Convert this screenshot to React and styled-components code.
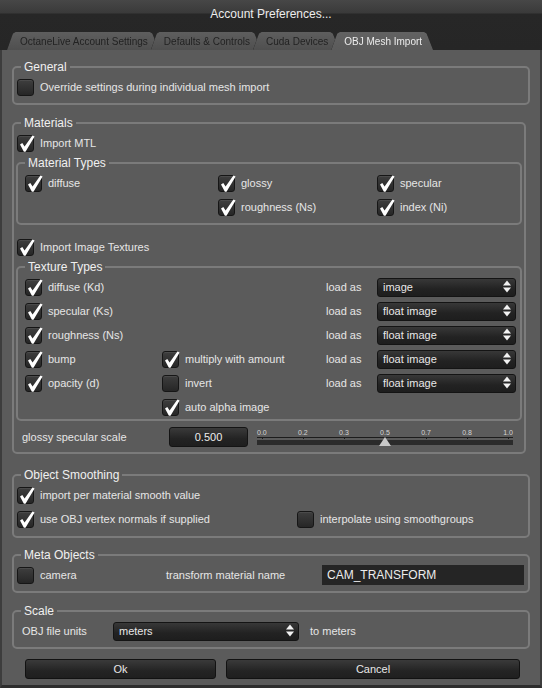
import React from "react";
import styled, { createGlobalStyle } from "styled-components";

const GlobalStyle = createGlobalStyle`
  html, body {
    margin: 0;
    padding: 0;
    background: #5b5b5b;
  }
  body {
    font-family: "Liberation Sans", Arial, sans-serif;
    font-size: 11px;
    color: #e6e6e6;
  }
  * {
    box-sizing: border-box;
  }
`;

const Window = styled.div`
  width: 542px;
  height: 688px;
  display: flex;
  flex-direction: column;
  background: #5b5b5b;
  overflow: hidden;
`;

const Header = styled.div`
  height: 50px;
  display: flex;
  flex-direction: column;
  background: linear-gradient(#474747 0, #3a3a3a 13px, #272727 14px, #262626 100%);
`;

const Title = styled.div`
  height: 32px;
  padding-top: 7px;
  text-align: center;
  font-size: 12px;
  line-height: 14px;
  color: #ececec;
`;

const TabBar = styled.div`
  display: flex;
  align-items: flex-end;
  height: 18px;
  padding-left: 7px;
`;

const Tab = styled.div`
  position: relative;
  margin-left: -8px;
  z-index: ${(p) => (p.$active ? 2 : 1)};
  filter: drop-shadow(0 0 0.7px #101010);

  &:first-child {
    margin-left: 0;
  }
`;

const TabFace = styled.div`
  height: 18px;
  padding: 0 11px 0 13px;
  line-height: 19px;
  font-size: 10px;
  white-space: nowrap;
  color: ${(p) => (p.$active ? "#ececec" : "#222")};
  background: ${(p) =>
    p.$active
      ? "linear-gradient(#626262, #5b5b5b)"
      : "linear-gradient(#5e5e5e, #4f4f4f)"};
  clip-path: polygon(
    0 100%,
    5px 4px,
    6px 1.5px,
    8.5px 0,
    calc(100% - 9px) 0,
    calc(100% - 6.5px) 1.5px,
    calc(100% - 5.5px) 4px,
    100% 100%
  );
`;

const Body = styled.div`
  flex: 1;
  padding: 0 10px;
  border-left: 2px solid #3d3d3d;
  border-right: 2px solid #3d3d3d;
  border-bottom: 3px solid #2e2e2e;
`;

const Group = styled.fieldset`
  margin: ${(p) => p.$mt || 0}px ${(p) => p.$mr || 0}px 0 ${(p) => p.$ml || 0}px;
  padding: 0 ${(p) => p.$pr ?? 3}px ${(p) => p.$pb || 0}px ${(p) => p.$pl ?? 3}px;
  border: 2px solid #7b7b7b;
  border-radius: 5px;
  min-width: 0;
`;

const Legend = styled.legend`
  margin-left: ${(p) => p.$ml ?? 4}px;
  padding: 0 3px;
  font-size: 12px;
  line-height: 16px;
  color: #f0f0f0;
`;

const Row = styled.div`
  display: flex;
  align-items: center;
  height: 24px;
  margin-top: ${(p) => p.$mt || 0}px;
  padding-left: ${(p) => p.$pl || 0}px;
`;

const Grid = styled.div`
  display: grid;
  grid-template-columns: ${(p) => p.$cols};
  grid-auto-rows: 24px;
  align-items: center;
`;

const Label = styled.label`
  display: flex;
  align-items: center;
  gap: 6px;
  white-space: nowrap;
`;

const Box = styled.span`
  position: relative;
  flex-shrink: 0;
  width: 17px;
  height: 17px;
  border: 1px solid #161616;
  border-radius: 3px;
  background: linear-gradient(#3e3e3e, #262626);
  box-shadow: inset 0 1px 0 rgba(255, 255, 255, 0.07);
`;

const Tick = styled.svg`
  position: absolute;
  left: -1px;
  top: -1px;
  overflow: visible;
`;

const Text = styled.span`
  white-space: nowrap;
  width: ${(p) => (p.$w ? `${p.$w}px` : "auto")};
  margin-left: ${(p) => p.$ml || 0}px;
  flex-shrink: 0;
`;

const SelectBox = styled.div`
  display: flex;
  align-items: center;
  justify-content: space-between;
  width: ${(p) => (p.$w ? `${p.$w}px` : "100%")};
  height: 19px;
  padding: 0 4px 1px 5px;
  border: 1px solid #141414;
  border-radius: 3px;
  background: linear-gradient(#383838, #222 60%, #1e1e1e);
  color: #e8e8e8;
`;

const NumberField = styled.div`
  width: 79px;
  height: 20px;
  line-height: 19px;
  text-align: center;
  border: 1px solid #141414;
  border-radius: 3px;
  background: linear-gradient(#3a3a3a, #232323 60%, #1f1f1f);
  color: #ececec;
`;

const TextField = styled.div`
  width: 202px;
  height: 20px;
  line-height: 20px;
  padding-left: 5px;
  background: #252525;
  color: #ececec;
  font-size: 12px;
`;

const Slider = styled.div`
  position: relative;
  width: 256px;
  height: 24px;
  margin-left: 9px;
  display: flex;
  flex-direction: column;
  padding-top: 4px;
`;

const SliderScale = styled.div`
  display: flex;
  justify-content: space-between;
  height: 8px;
  font-size: 7px;
  line-height: 8px;
  color: #d4d4d4;
`;

const ScaleMark = styled.span`
  position: relative;

  &::after {
    content: "";
    position: absolute;
    left: 50%;
    bottom: -2px;
    width: 1px;
    height: 2px;
    background: #1c1c1c;
  }
`;

const Rule = styled.div`
  height: 1px;
  background: #1c1c1c;
`;

const Track = styled.div`
  margin-top: 2px;
  height: 5px;
  background: #2b2b2b;
`;

const Thumb = styled.div`
  position: absolute;
  left: calc(50% - 6.5px);
  top: 12px;
  width: 0;
  height: 0;
  border-left: 6.5px solid transparent;
  border-right: 6.5px solid transparent;
  border-bottom: 9px solid #c8c8c8;
`;

const Buttons = styled.div`
  display: flex;
  gap: 10px;
  margin-top: 10px;
  padding-left: 13px;
`;

const Button = styled.button`
  width: ${(p) => p.$w}px;
  height: 20px;
  padding: 0;
  border: 1px solid #121212;
  border-radius: 3px;
  background: linear-gradient(#3a3a3a, #242424 60%, #1f1f1f);
  color: #e8e8e8;
  font-family: inherit;
  font-size: 11px;
`;

function CheckBox({ on, children }) {
  return (
    <Label>
      <Box>
        {on && (
          <Tick width="17" height="17" viewBox="0 0 17 17">
            <path
              d="M3 9.6 L5.3 7.9 L7.6 11.6 L15.4 0.4 L17.6 1.5 L8.5 16.8 L6.9 16.8 Z"
              fill="#fff"
            />
          </Tick>
        )}
      </Box>
      {children && <span>{children}</span>}
    </Label>
  );
}

function Select({ value, w }) {
  return (
    <SelectBox $w={w}>
      <span>{value}</span>
      <svg width="8" height="13" viewBox="0 0 8 13">
        <path d="M0 5.5 L4 0.5 L8 5.5 Z" fill="#f2f2f2" />
        <path d="M0 7.5 L4 12.5 L8 7.5 Z" fill="#f2f2f2" />
      </svg>
    </SelectBox>
  );
}

const tabs = [
  "OctaneLive Account Settings",
  "Defaults & Controls",
  "Cuda Devices",
  "OBJ Mesh Import",
];

const textures = [
  { name: "diffuse (Kd)", value: "image" },
  { name: "specular (Ks)", value: "float image" },
  { name: "roughness (Ns)", value: "float image" },
  { name: "bump", extra: "multiply with amount", extraOn: true, value: "float image" },
  { name: "opacity (d)", extra: "invert", extraOn: false, value: "float image" },
];

const marks = ["0.0", "0.2", "0.3", "0.5", "0.7", "0.8", "1.0"];

export default function App() {
  return (
    <>
      <GlobalStyle />
      <Window>
        <Header>
          <Title>Account Preferences...</Title>
          <TabBar>
            {tabs.map((t, i) => (
              <Tab key={t} $active={i === 3}>
                <TabFace $active={i === 3}>{t}</TabFace>
              </Tab>
            ))}
          </TabBar>
        </Header>

        <Body>
          <Group $mt={9} $pb={4}>
            <Legend>General</Legend>
            <Row>
              <CheckBox>Override settings during individual mesh import</CheckBox>
            </Row>
          </Group>

          <Group $mt={10} $mr={4} $pr={2} $pb={3}>
            <Legend>Materials</Legend>
            <Row>
              <CheckBox on>Import MTL</CheckBox>
            </Row>
            <Group $ml={-1} $pl={7} $pb={4}>
              <Legend $ml={0}>Material Types</Legend>
              <Grid $cols="193px 159px 1fr">
                <CheckBox on>diffuse</CheckBox>
                <CheckBox on>glossy</CheckBox>
                <CheckBox on>specular</CheckBox>
                <span />
                <CheckBox on>roughness (Ns)</CheckBox>
                <CheckBox on>index (Ni)</CheckBox>
              </Grid>
            </Group>
            <Row $mt={10}>
              <CheckBox on>Import Image Textures</CheckBox>
            </Row>
            <Group $ml={-1} $pl={7} $pb={0}>
              <Legend $ml={0}>Texture Types</Legend>
              <Grid $cols="137px 164px 51px 139px">
                {textures.map((t) => (
                  <React.Fragment key={t.name}>
                    <CheckBox on>{t.name}</CheckBox>
                    {t.extra ? <CheckBox on={t.extraOn}>{t.extra}</CheckBox> : <span />}
                    <span>load as</span>
                    <Select value={t.value} />
                  </React.Fragment>
                ))}
                <span />
                <CheckBox on>auto alpha image</CheckBox>
              </Grid>
            </Group>
            <Row $mt={4} $pl={5}>
              <Text $w={147}>glossy specular scale</Text>
              <NumberField>0.500</NumberField>
              <Slider>
                <SliderScale>
                  {marks.map((m) => (
                    <ScaleMark key={m}>{m}</ScaleMark>
                  ))}
                </SliderScale>
                <Rule />
                <Track />
                <Thumb />
              </Slider>
            </Row>
          </Group>

          <Group $mt={13} $pb={5}>
            <Legend>Object Smoothing</Legend>
            <Grid $cols="280px 1fr">
              <CheckBox on>import per material smooth value</CheckBox>
              <span />
              <CheckBox on>use OBJ vertex normals if supplied</CheckBox>
              <CheckBox>interpolate using smoothgroups</CheckBox>
            </Grid>
          </Group>

          <Group $mt={9} $pb={4}>
            <Legend>Meta Objects</Legend>
            <Grid $cols="149px 156px 202px">
              <CheckBox>camera</CheckBox>
              <span>transform material name</span>
              <TextField>CAM_TRANSFORM</TextField>
            </Grid>
          </Group>

          <Group $mt={10} $pb={4}>
            <Legend>Scale</Legend>
            <Row $pl={5}>
              <Text $w={91}>OBJ file units</Text>
              <Select value="meters" w={186} />
              <Text $ml={11}>to meters</Text>
            </Row>
          </Group>

          <Buttons>
            <Button $w={191}>Ok</Button>
            <Button $w={294}>Cancel</Button>
          </Buttons>
        </Body>
      </Window>
    </>
  );
}
